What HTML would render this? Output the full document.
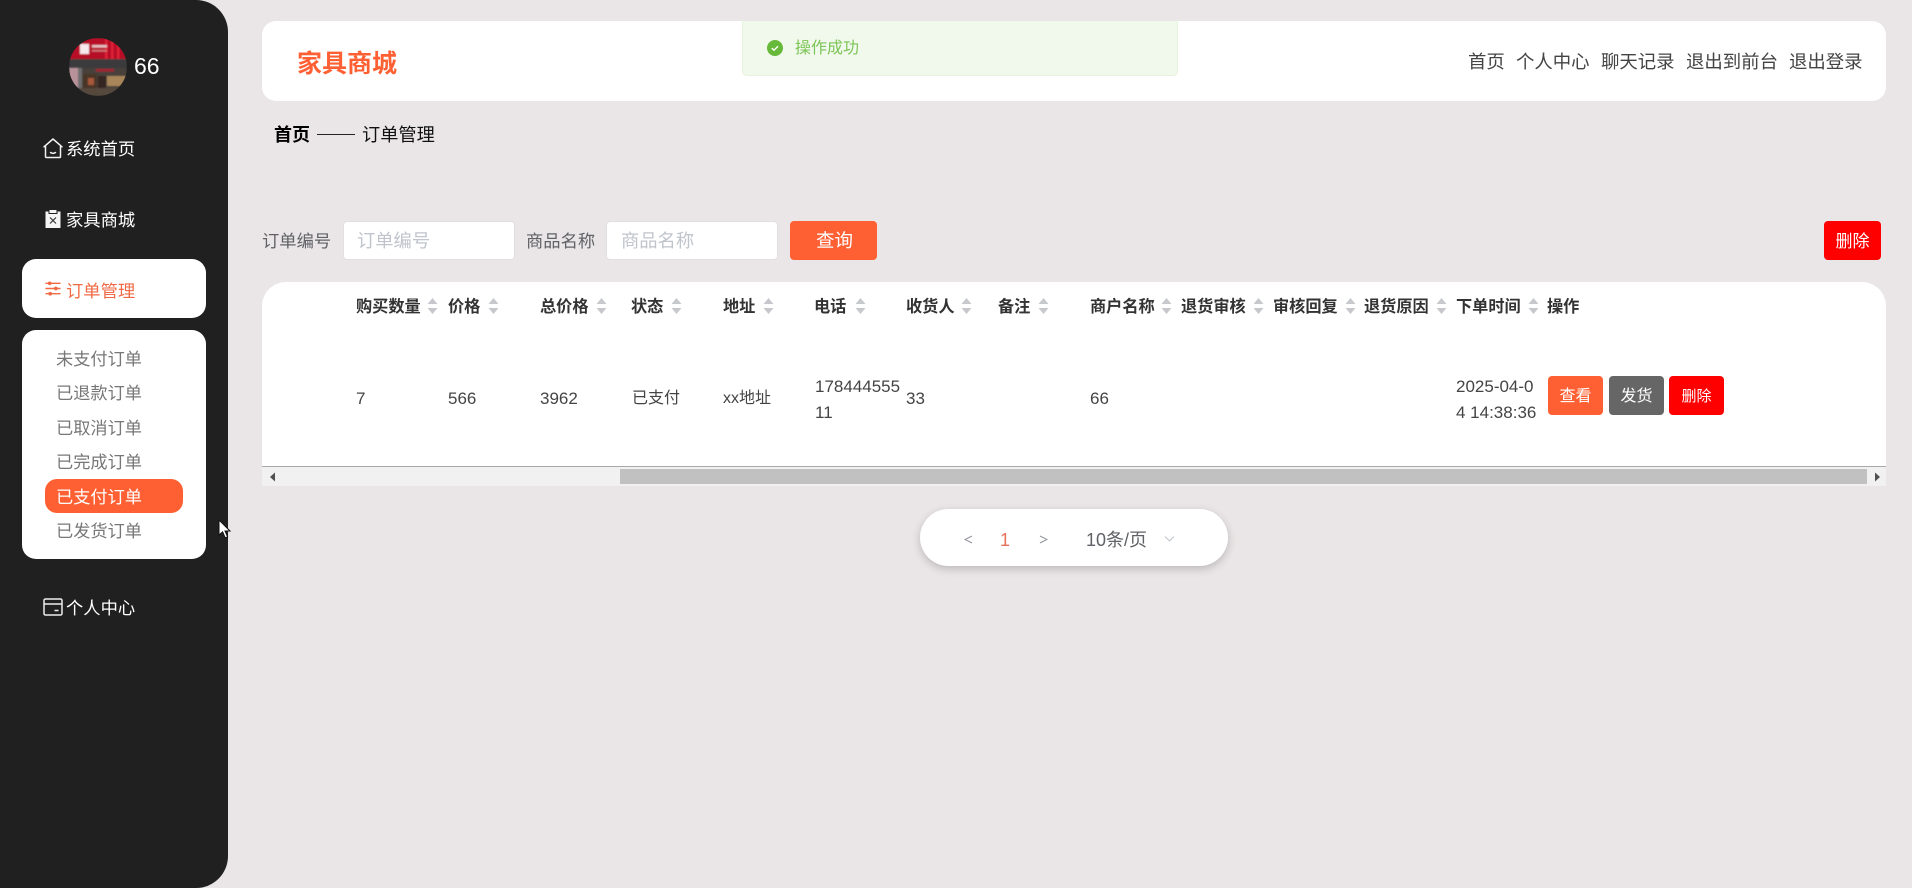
<!DOCTYPE html>
<html lang="zh">
<head>
<meta charset="utf-8">
<title>家具商城</title>
<style>
html,body{margin:0;padding:0;width:1912px;height:888px;overflow:hidden;background:#eae6e7;font-family:"Liberation Sans","Noto Sans CJK SC",sans-serif;}
.a{position:absolute;white-space:nowrap;}
.c{display:flex;align-items:center;justify-content:center;}
.side{left:0;top:0;width:228px;height:888px;background:#202020;border-radius:0 32px 32px 0;}
.mi{font-size:17.300px;line-height:24px;color:#fff;}
.sub{font-size:17.200px;line-height:24px;color:#777;left:56px;}
.th{font-size:16.200px;line-height:24px;font-weight:700;color:#333;top:295px;}
.td{font-size:16px;line-height:24px;color:#444;}
.n{font-size:17px;}
.caret{position:absolute;width:11px;height:18px;top:297px;}
.btn{border-radius:4px;color:#fff;box-sizing:border-box;}
.nav{top:50px;font-size:18.400px;line-height:24px;color:#444;}
.lb{top:229px;font-size:17.300px;line-height:24px;color:#606266;}
.ph{top:229px;font-size:18.300px;line-height:24px;color:#c0c4cc;}
.ip{top:221px;width:172px;height:39px;box-sizing:border-box;background:#fff;border:1px solid #e2dfdf;border-radius:4px;}
</style>
</head>
<body>
<div class="a side"></div>

<svg class="a" style="left:69px;top:38px" width="58" height="58" viewBox="0 0 58 58">
<defs><clipPath id="cp"><circle cx="29" cy="29" r="29"/></clipPath><filter id="bl"><feGaussianBlur stdDeviation="0.7"/></filter></defs>
<g clip-path="url(#cp)"><g filter="url(#bl)">
<rect width="58" height="58" fill="#463f3a"/>
<rect width="58" height="23" fill="#b80f26"/>
<path d="M36 0h2.500v22H36zM42 0h2.500v22H42zM48 0h2.500v22H48z" fill="#de2438"/>
<rect y="21" width="58" height="9" fill="#3a3a3c"/>
<rect x="11" y="6" width="9" height="10" fill="#f6e8ec"/>
<rect x="23" y="7" width="15" height="2.500" fill="#e8c0c4"/>
<rect x="23" y="12" width="15" height="1.500" fill="#d07a80"/>
<rect x="0" y="30" width="9" height="20" fill="#b8929a"/>
<rect x="9" y="30" width="4" height="28" fill="#6e6e6e"/>
<rect x="27" y="31" width="18" height="2.500" fill="#a81d30"/>
<rect x="14" y="36" width="14" height="15" fill="#4a3428"/>
<rect x="19" y="40" width="6" height="7" fill="#a8583a"/>
<rect x="38" y="38" width="20" height="10" fill="#a8865a"/>
<rect x="29" y="38" width="8" height="14" fill="#342822"/>
<rect y="50" width="58" height="8" fill="#54493e"/>
</g></g>
</svg>
<div class="a" style="left:134px;top:51px;font-size:23px;line-height:30px;color:#fff;">66</div>

<!-- home icon -->
<svg class="a" style="left:43px;top:138px" width="20" height="21" viewBox="0 0 20 21" fill="none" stroke="#f2f2f2" stroke-width="1.500" stroke-linejoin="round" stroke-linecap="round">
<path d="M1 8.800 10 1l9 7.800M2.500 7.500v11a1 1 0 0 0 1 1h13a1 1 0 0 0 1-1v-11"/><path d="M7.500 14.500c1.500 1 3.500 1 5 0"/></svg>
<div class="a mi" style="left:66px;top:137px">系统首页</div>

<!-- clipboard icon -->
<svg class="a" style="left:44px;top:209px" width="18" height="20" viewBox="0 0 18 20">
<rect x="1.500" y="2.500" width="15" height="16.500" fill="#f4f4f4"/><rect x="5" y="0.500" width="8" height="4" fill="#f4f4f4" stroke="#202020" stroke-width="1"/>
<path d="M6 8.500l6 6M12 8.500l-6 6" stroke="#333" stroke-width="1.200"/></svg>
<div class="a mi" style="left:66px;top:208px">家具商城</div>

<div class="a" style="left:22px;top:259px;width:184px;height:59px;background:#fff;border-radius:14px"></div>
<svg class="a" style="left:44px;top:280px" width="18" height="17" viewBox="0 0 18 18" stroke="#ef6a45" stroke-width="1.500" fill="#ef6a45">
<path d="M1 3.500h16M1 9h16M1 14.500h16" fill="none"/><circle cx="5.500" cy="3.500" r="1.200"/><circle cx="12" cy="9" r="1.200"/><circle cx="6" cy="14.500" r="1.200"/></svg>
<div class="a mi" style="left:66px;top:279px;color:#f06a45">订单管理</div>

<div class="a" style="left:22px;top:330px;width:184px;height:229px;background:#fff;border-radius:14px"></div>
<div class="a sub" style="top:347px">未支付订单</div>
<div class="a sub" style="top:381px">已退款订单</div>
<div class="a sub" style="top:416px">已取消订单</div>
<div class="a sub" style="top:450px">已完成订单</div>
<div class="a" style="left:45px;top:479px;width:138px;height:34px;background:#ff6033;border-radius:12px"></div>
<div class="a sub" style="top:485px;color:#fff">已支付订单</div>
<div class="a sub" style="top:519px">已发货订单</div>

<!-- wallet icon -->
<svg class="a" style="left:43px;top:598px" width="20" height="18" viewBox="0 0 20 18" fill="none" stroke="#eee" stroke-width="1.500">
<rect x="1" y="1" width="18" height="16" rx="1.500"/><path d="M1 6h18M11.500 12.500h4"/></svg>
<div class="a mi" style="left:66px;top:596px">个人中心</div>

<!-- cursor -->
<svg class="a" style="left:218px;top:519px" width="14" height="20" viewBox="0 0 14 20">
<path d="M1 1v15l3.600-3.200 2.600 6 2.400-1-2.600-5.800H12z" fill="#fff" stroke="#111" stroke-width="1"/></svg>

<!-- top bar -->
<div class="a" style="left:262px;top:21px;width:1624px;height:80px;background:#fff;border-radius:14px"></div>
<div class="a" style="left:297px;top:47px;font-size:25px;line-height:34px;font-weight:700;color:#ff6033">家具商城</div>
<div class="a nav" style="left:1468px">首页</div>
<div class="a nav" style="left:1516px">个人中心</div>
<div class="a nav" style="left:1601px">聊天记录</div>
<div class="a nav" style="left:1686px">退出到前台</div>
<div class="a nav" style="left:1789px">退出登录</div>

<!-- toast -->
<div class="a" style="left:742px;top:21px;width:436px;height:55px;box-sizing:border-box;background:#f0f9eb;border:1px solid #e6f3de;border-top:none;border-radius:0 0 5px 5px"></div>
<svg class="a" style="left:767px;top:40px" width="16" height="16" viewBox="0 0 16 16"><circle cx="8" cy="8" r="8" fill="#67b93a"/><path d="M4.800 8.200 7 10.200l4-4" fill="none" stroke="#fff" stroke-width="1.400"/></svg>
<div class="a" style="left:795px;top:38px;font-size:16px;line-height:22px;color:#7cc456">操作成功</div>

<!-- breadcrumb -->
<div class="a" style="left:274px;top:123px;font-size:18px;line-height:24px;font-weight:700;color:#000">首页</div>
<div class="a" style="left:317px;top:134px;width:38px;height:1px;background:#222"></div>
<div class="a" style="left:362px;top:123px;font-size:18.200px;line-height:24px;color:#111">订单管理</div>

<!-- search -->
<div class="a lb" style="left:262px">订单编号</div>
<div class="a ip" style="left:343px"></div>
<div class="a ph" style="left:357px">订单编号</div>
<div class="a lb" style="left:526px">商品名称</div>
<div class="a ip" style="left:606px"></div>
<div class="a ph" style="left:621px">商品名称</div>
<div class="a c btn" style="left:790px;top:221px;width:87px;height:39px;background:#ff6033;font-size:18.500px;padding:0 0 2px 2px">查询</div>
<div class="a c btn" style="left:1824px;top:221px;width:57px;height:39px;background:#f00;font-size:17px;padding-bottom:2px">删除</div>

<!-- table -->
<div class="a" style="left:262px;top:282px;width:1624px;height:184px;background:#fff;border-radius:24px 24px 0 0"></div>
<div class="th a" style="left:356px">购买数量</div>
<div class="th a" style="left:448px">价格</div>
<div class="th a" style="left:540px">总价格</div>
<div class="th a" style="left:631px">状态</div>
<div class="th a" style="left:723px">地址</div>
<div class="th a" style="left:814px">电话</div>
<div class="th a" style="left:906px">收货人</div>
<div class="th a" style="left:998px">备注</div>
<div class="th a" style="left:1090px">商户名称</div>
<div class="th a" style="left:1181px">退货审核</div>
<div class="th a" style="left:1273px">审核回复</div>
<div class="th a" style="left:1364px">退货原因</div>
<div class="th a" style="left:1456px">下单时间</div>
<div class="th a" style="left:1547px">操作</div>

<svg class="caret" style="left:427px" viewBox="0 0 11 18"><path d="M5.500 1 10.500 7H.5zM5.500 17 .5 11h10z" fill="#c6c8cc"/></svg>
<svg class="caret" style="left:488px" viewBox="0 0 11 18"><path d="M5.500 1 10.500 7H.5zM5.500 17 .5 11h10z" fill="#c6c8cc"/></svg>
<svg class="caret" style="left:596px" viewBox="0 0 11 18"><path d="M5.500 1 10.500 7H.5zM5.500 17 .5 11h10z" fill="#c6c8cc"/></svg>
<svg class="caret" style="left:671px" viewBox="0 0 11 18"><path d="M5.500 1 10.500 7H.5zM5.500 17 .5 11h10z" fill="#c6c8cc"/></svg>
<svg class="caret" style="left:763px" viewBox="0 0 11 18"><path d="M5.500 1 10.500 7H.5zM5.500 17 .5 11h10z" fill="#c6c8cc"/></svg>
<svg class="caret" style="left:855px" viewBox="0 0 11 18"><path d="M5.500 1 10.500 7H.5zM5.500 17 .5 11h10z" fill="#c6c8cc"/></svg>
<svg class="caret" style="left:961px" viewBox="0 0 11 18"><path d="M5.500 1 10.500 7H.5zM5.500 17 .5 11h10z" fill="#c6c8cc"/></svg>
<svg class="caret" style="left:1038px" viewBox="0 0 11 18"><path d="M5.500 1 10.500 7H.5zM5.500 17 .5 11h10z" fill="#c6c8cc"/></svg>
<svg class="caret" style="left:1161px" viewBox="0 0 11 18"><path d="M5.500 1 10.500 7H.5zM5.500 17 .5 11h10z" fill="#c6c8cc"/></svg>
<svg class="caret" style="left:1253px" viewBox="0 0 11 18"><path d="M5.500 1 10.500 7H.5zM5.500 17 .5 11h10z" fill="#c6c8cc"/></svg>
<svg class="caret" style="left:1345px" viewBox="0 0 11 18"><path d="M5.500 1 10.500 7H.5zM5.500 17 .5 11h10z" fill="#c6c8cc"/></svg>
<svg class="caret" style="left:1436px" viewBox="0 0 11 18"><path d="M5.500 1 10.500 7H.5zM5.500 17 .5 11h10z" fill="#c6c8cc"/></svg>
<svg class="caret" style="left:1528px" viewBox="0 0 11 18"><path d="M5.500 1 10.500 7H.5zM5.500 17 .5 11h10z" fill="#c6c8cc"/></svg>

<div class="a td n" style="left:356px;top:387px">7</div>
<div class="a td n" style="left:448px;top:387px">566</div>
<div class="a td n" style="left:540px;top:387px">3962</div>
<div class="a td" style="left:632px;top:387px">已支付</div>
<div class="a td" style="left:723px;top:387px">xx地址</div>
<div class="a td n" style="left:815px;top:374px;line-height:25.500px">178444555<br>11</div>
<div class="a td n" style="left:906px;top:387px">33</div>
<div class="a td n" style="left:1090px;top:387px">66</div>
<div class="a td n" style="left:1456px;top:374px;line-height:26px">2025-04-0<br>4 14:38:36</div>
<div class="a c btn" style="left:1548px;top:376px;width:55px;height:39px;background:#ff6033;font-size:16px;padding-bottom:3px">查看</div>
<div class="a c btn" style="left:1609px;top:376px;width:55px;height:39px;background:#666;font-size:16px;padding-bottom:3px">发货</div>
<div class="a c btn" style="left:1669px;top:376px;width:55px;height:39px;background:#f00;font-size:15px">删除</div>

<!-- scrollbar -->
<div class="a" style="left:262px;top:466px;width:1624px;height:1px;background:#a9a9a9"></div>
<div class="a" style="left:262px;top:467px;width:1624px;height:19px;background:#f1f1f1"></div>
<div class="a" style="left:620px;top:469px;width:1247px;height:15px;background:#c1c1c1"></div>
<svg class="a" style="left:269px;top:472px" width="8" height="10" viewBox="0 0 8 10"><path d="M6 .5v9L1 5z" fill="#505050"/></svg>
<svg class="a" style="left:1873px;top:472px" width="8" height="10" viewBox="0 0 8 10"><path d="M2 .5v9L7 5z" fill="#505050"/></svg>

<!-- pagination -->
<div class="a" style="left:920px;top:509px;width:308px;height:57px;background:#fff;border-radius:29px;box-shadow:0 3px 9px rgba(0,0,0,.2)"></div>
<svg class="a" style="left:964px;top:535px" width="9" height="9" viewBox="0 0 9 9"><path d="M8 1 1 4.500 8 8" fill="none" stroke="#909399" stroke-width="1"/></svg>
<div class="a" style="left:1000px;top:527px;font-size:18px;line-height:26px;color:#e8705a">1</div>
<svg class="a" style="left:1039px;top:535px" width="9" height="9" viewBox="0 0 9 9"><path d="M1 1 8 4.500 1 8" fill="none" stroke="#909399" stroke-width="1"/></svg>
<div class="a" style="left:1086px;top:528px;font-size:18px;line-height:24px;color:#606266">10条/页</div>
<svg class="a" style="left:1164px;top:535px" width="11" height="8" viewBox="0 0 11 8"><path d="M1 1.500 5.500 6 10 1.500" fill="none" stroke="#c0c4cc" stroke-width="1"/></svg>
</body>
</html>
